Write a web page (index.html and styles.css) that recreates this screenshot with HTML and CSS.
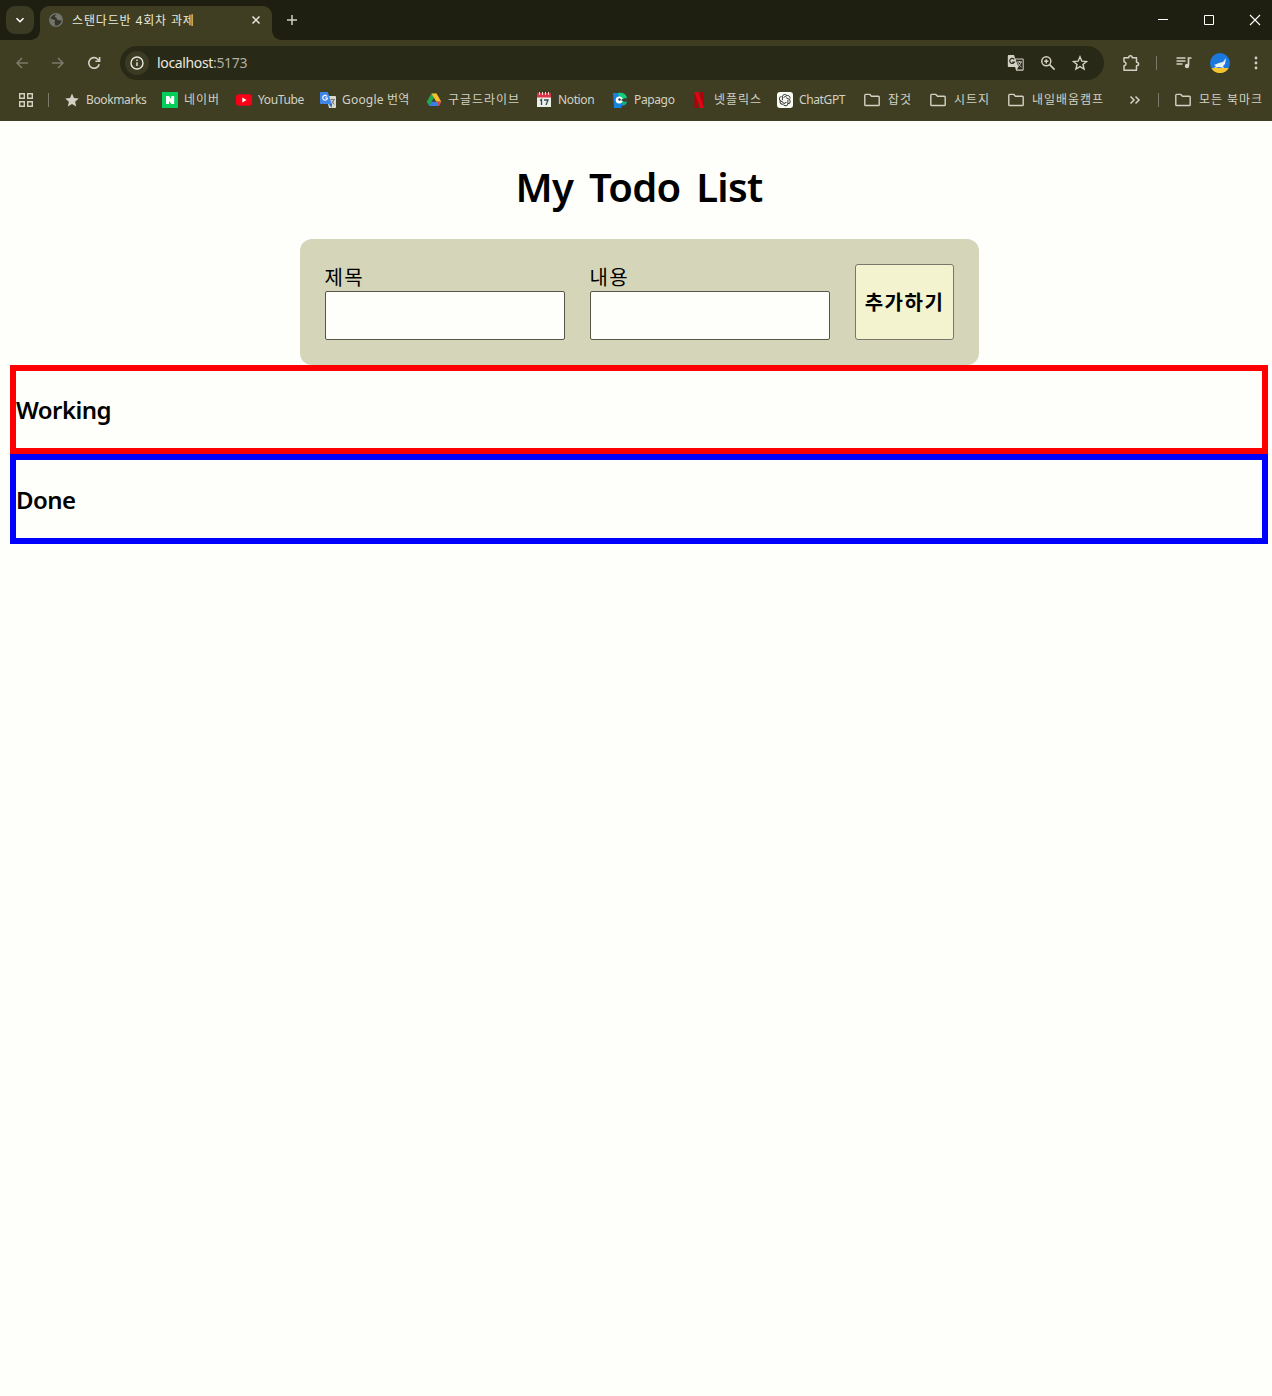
FILE: index.html
```html
<!DOCTYPE html>
<html lang="ko">
<head>
<meta charset="utf-8">
<title>스탠다드반 4회차 과제</title>
<link rel="stylesheet" href="styles.css">
</head>
<body>
<svg class="defs" width="0" height="0">
  <symbol id="folder" viewBox="0 0 16 16"><path d="M.8 12.7V3.2c0-.5.3-.8.8-.8h4.2l1.7 1.8h6.9c.5 0 .8.3.8.8v7.7c0 .5-.3.8-.8.8H1.6c-.5 0-.8-.3-.8-.8z" fill="none" stroke="currentColor" stroke-width="1.4"/></symbol>
</svg>
<header class="browser">
  <div class="tabstrip">
    <div class="tabsearch"><svg width="10" height="10" viewBox="0 0 10 10"><path d="M1.5 3.2 5 6.7l3.500-3.500" fill="none" stroke="currentColor" stroke-width="1.6"/></svg></div>
    <div class="tab">
      <svg width="16" height="16" viewBox="0 0 16 16"><circle cx="8" cy="8" r="6.300" fill="#353529" stroke="#757570" stroke-width="1.300"/><path d="M2 6.500 7 8l-.5 2.500 1 3.300C4 13.500 1.800 10.500 2 6.500zM8.500 2l-2 2.500 2 1.500 1 2 4 .5.500-1C13.700 4.500 11.500 2.200 8.500 2z" fill="#757570"/></svg>
      <span class="tab-title">스탠다드반 4회차 과제</span>
      <svg width="10" height="10" viewBox="0 0 10 10"><path d="m1.500 1.500 7 7m0-7-7 7" stroke="currentColor" stroke-width="1.500"/></svg>
    </div>
    <svg class="newtab" width="12" height="12" viewBox="0 0 12 12"><path d="M6 1v10M1 6h10" stroke="currentColor" stroke-width="1.500"/></svg>
    <div class="window-controls">
      <svg width="12" height="12" viewBox="0 0 12 12"><path d="M1 5.500h10" stroke="currentColor"/></svg>
      <svg width="12" height="12" viewBox="0 0 12 12"><path d="M1.500 1.500h9v9h-9z" fill="none" stroke="currentColor"/></svg>
      <svg width="12" height="12" viewBox="0 0 12 12"><path d="m1 1 10 10m0-10L1 11" stroke="currentColor" stroke-width="1.100"/></svg>
    </div>
  </div>
  <div class="toolbar">
    <div class="nav">
      <svg class="dim" width="16" height="16" viewBox="0 0 16 16"><path d="M14 8H3m5-5L3 8l5 5" fill="none" stroke="currentColor" stroke-width="1.500"/></svg>
      <svg class="dim" width="16" height="16" viewBox="0 0 16 16"><path d="M2 8h11M8 3l5 5-5 5" fill="none" stroke="currentColor" stroke-width="1.500"/></svg>
      <svg width="16" height="16" viewBox="0 0 16 16"><path d="M13.200 9.200a5.300 5.300 0 1 1-1.400-5l1.700 1.700M13.600 2v4.200H9.400" fill="none" stroke="currentColor" stroke-width="1.600"/></svg>
    </div>
    <div class="omnibox">
      <div class="site-info"><svg width="16" height="16" viewBox="0 0 16 16"><circle cx="8" cy="8" r="6" fill="none" stroke="currentColor" stroke-width="1.400"/><path d="M8 7.200v3.800M8 4.600v1.500" stroke="currentColor" stroke-width="1.400"/></svg></div>
      <span class="url">localhost<span class="port">:5173</span></span>
      <div class="omni-actions">
        <svg width="18" height="18" viewBox="0 0 18 18"><path d="M2 1h5l1.200 3.500h7.300c.8 0 1.200.4 1.200 1.200v9.800c0 .8-.4 1.200-1.200 1.200H9.200L8 13H2c-.8 0-1.200-.4-1.200-1.200V2.200C.8 1.400 1.200 1 2 1z" fill="currentColor"/><path d="M8.700 5.500h7v10H10l1.400-2.500z" fill="#2b2b20"/><path d="M7.200 5.300A2.500 2.500 0 1 0 7.500 8H5.200" fill="none" stroke="#2b2b20" stroke-width="1.200"/><path d="M10 8h5m-2.500-1v1m1.500 0c-.4 2-1.600 3.500-3 4.500M11 9c.6 1.800 2 3 3.500 4" fill="none" stroke="currentColor" stroke-width="1"/></svg>
        <svg width="16" height="16" viewBox="0 0 16 16"><circle cx="6.300" cy="6.300" r="4.500" fill="none" stroke="currentColor" stroke-width="1.500"/><path d="m9.600 9.600 5 5M6.300 4.200v4.200M4.200 6.300h4.200" stroke="currentColor" stroke-width="1.500"/></svg>
        <svg width="16" height="16" viewBox="0 0 16 16"><path d="m8 1.800 1.800 4.300 4.700.4-3.500 3 1.100 4.600L8 11.600l-4.100 2.500L5 9.500l-3.500-3 4.700-.4z" fill="none" stroke="currentColor" stroke-width="1.400"/></svg>
      </div>
    </div>
    <div class="extras">
      <svg width="18" height="18" viewBox="0 0 18 18"><path d="M2 3.800h4.700C6.700 1 10.200 1 10.200 3.800h4.300v4.500c2.800 0 2.800 3.500 0 3.500v4.400H2v-4.400c2.800-.5 2.800-3.500 0-4z" fill="none" stroke="currentColor" stroke-width="1.500" stroke-linejoin="round"/></svg>
      <i class="divider"></i>
      <svg width="16" height="16" viewBox="0 0 16 16"><path d="M.5 3h9M.5 6h9M.5 9h6" stroke="currentColor" stroke-width="1.500"/><path d="M15.500 3h-3v7.500" fill="none" stroke="currentColor" stroke-width="1.700"/><circle cx="11" cy="11" r="2.200" fill="currentColor"/></svg>
      <svg class="avatar" width="20" height="20" viewBox="0 0 20 20"><circle cx="10" cy="10" r="10" fill="#1b78dc"/><path d="M1.300 15h17.400a10 10 0 0 1-17.400 0z" fill="#f5c32c"/><path d="m4 12 5-2 4-1 3-4-1 6-2 2 1 2-5-1-5 1 2-2z" fill="#e8f2f5"/></svg>
      <svg width="16" height="16" viewBox="0 0 16 16" fill="currentColor"><circle cx="8" cy="3" r="1.400"/><circle cx="8" cy="8" r="1.400"/><circle cx="8" cy="13" r="1.400"/></svg>
    </div>
  </div>
  <nav class="bookmarks">
    <div class="item"><svg width="16" height="16" viewBox="0 0 16 16"><path d="M1.700 1.700h4.600v4.600H1.700zM9.700 1.700h4.600v4.600H9.700zM1.700 9.700h4.600v4.600H1.700zM9.700 9.700h4.600v4.600H9.700z" fill="none" stroke="currentColor" stroke-width="1.400"/></svg></div>
    <i class="divider"></i>
    <div class="item"><svg width="16" height="16" viewBox="0 0 16 16"><path d="m8 1.500 1.900 4.600 4.900.4-3.700 3.200 1.100 4.800L8 12l-4.200 2.500 1.100-4.800L1.200 6.500l4.900-.4z" fill="currentColor"/></svg><span>Bookmarks</span></div>
    <div class="item ko"><svg width="16" height="16" viewBox="0 0 16 16"><path d="M0 0h16v16H0z" fill="#04cf5c"/><path d="M4 4h3l2.200 3.300V4h3v8h-3L7 8.700V12H4z" fill="#fff"/></svg><span>네이버</span></div>
    <div class="item"><svg width="16" height="16" viewBox="0 0 16 16"><rect y="2.300" width="16" height="11.500" rx="3" fill="#fa0018"/><path d="m6.300 5.500 4.300 2.500-4.300 2.500z" fill="#fff"/></svg><span>YouTube</span></div>
    <div class="item mixed"><svg width="16" height="16" viewBox="0 0 16 16"><path d="M6 4h9.200c.5 0 .8.3.8.8v10.400c0 .5-.3.800-.8.800H9z" fill="#d7d8d0"/><path d="M.8 0h7l4 12H.8c-.5 0-.8-.3-.8-.8V.8C0 .3.300 0 .8 0z" fill="#4086e8"/><path d="M7 4.300A2.400 2.400 0 1 0 7.500 6H5.200" fill="none" stroke="#fff" stroke-width="1.100"/><path d="m9 12 2.500 4 .5-4z" fill="#2864b8"/><path d="M10.700 7.500h4.200m-1 .2c-.4 1.800-1.200 3-2.300 4m.1-2.800 2.600 3.600" fill="none" stroke="#777"/></svg><span>Google 번역</span></div>
    <div class="item ko"><svg width="16" height="16" viewBox="0 0 16 16"><path d="M5.500 1.500h5L8 5.800 3.200 14 .7 9.800z" fill="#24a852"/><path d="M5.500 1.500h5l4.800 8.300h-5z" fill="#fbc02a"/><path d="M5.600 9.800h9.700L12.900 14H3.200z" fill="#397fe8"/><path d="m10.300 9.800 2.600 4.200 2.400-4.200z" fill="#e94335"/></svg><span>구글드라이브</span></div>
    <div class="item"><svg width="16" height="16" viewBox="0 0 16 16"><path d="M1 1h14v14H1z" fill="#eceee8"/><path d="M1 1h14v4.500H1z" fill="#d93544"/><path d="M3.500 0v3M6.500 0v3M9.500 0v3M12.500 0v3" stroke="#f6d5d5"/><path d="M4 8.500 5.500 7.500V13M8 8h4l-2 5" fill="none" stroke="#334d4d" stroke-width="1.300"/></svg><span>Notion</span></div>
    <div class="item"><svg width="16" height="16" viewBox="0 0 16 16"><path d="M1 1h7c4 0 6 2 7 5H9l6 4c-1 3-3 4-6 4l1 2H2z" fill="#1682dc"/><path d="M6 1c5-1 8 1 9 5L8 8z" fill="#12ce7b"/><path d="m9 9 6 1c-1 2-2 3-4 3z" fill="#12b86a"/><circle cx="7.200" cy="8" r="3.500" fill="#fff"/><circle cx="7.500" cy="7.500" r="1.200" fill="#223b54"/><path d="m8.500 8 5-2v4z" fill="#3c3c2c"/></svg><span>Papago</span></div>
    <div class="item ko"><svg width="16" height="16" viewBox="0 0 16 16"><path d="M2.500 0h3.700v16H2.500zM8.300 0H12v16H8.300z" fill="#b5000b"/><path d="M2.500 0h3.700L12 16H8.300z" fill="#e00715"/></svg><span>넷플릭스</span></div>
    <div class="item"><svg width="16" height="16" viewBox="0 0 16 16"><rect width="16" height="16" rx="3" fill="#fbfbf6"/><g fill="none" stroke="#292924" stroke-width=".9"><path id="knot" d="M5.400 8.200V4.800a2.400 2.400 0 0 1 4.500-1.100M6.500 5.500l3-1.700a2.400 2.400 0 0 1 3.400 3"/><use href="#knot" transform="rotate(120 8 8)"/><use href="#knot" transform="rotate(240 8 8)"/></g></svg><span>ChatGPT</span></div>
    <div class="item ko folder"><svg width="16" height="16"><use href="#folder"/></svg><span>잡것</span></div>
    <div class="item ko folder"><svg width="16" height="16"><use href="#folder"/></svg><span>시트지</span></div>
    <div class="item ko folder"><svg width="16" height="16"><use href="#folder"/></svg><span>내일배움캠프</span></div>
    <svg width="12" height="12" viewBox="0 0 12 12"><path d="m1.500 2.500 3.500 3.500-3.500 3.500M6.500 2.500 10 6 6.500 9.500" fill="none" stroke="currentColor" stroke-width="1.500"/></svg>
    <i class="divider"></i>
    <div class="item ko folder"><svg width="16" height="16"><use href="#folder"/></svg><span>모든 북마크</span></div>
  </nav>
</header>
<main class="page">
  <h1>My Todo List</h1>
  <form class="todo-form">
    <label class="field">제목<input type="text"></label>
    <label class="field">내용<input type="text"></label>
    <button type="button">추가하기</button>
  </form>
  <section class="list working"><h2>Working</h2></section>
  <section class="list done"><h2>Done</h2></section>
</main>
</body>
</html>
```
FILE: styles.css
```css
* { box-sizing: border-box; }
body {
  margin: 0;
  min-height: 1396px;
  background: #fefefa;
  color: #000;
  font-family: "Noto Sans", "Noto Sans CJK KR", sans-serif;
}
svg { display: block; flex: none; }
.defs { position: absolute; }

.browser { height: 121px; background: #3f3e22; color: #d2d1c4; }
.tabstrip { display: flex; height: 40px; background: #1f1f11; padding-left: 6px; }
.tabsearch {
  display: flex; align-items: center; justify-content: center;
  width: 28px; height: 28px; margin: 6px 6px 0 0;
  border-radius: 9px; background: #3b3a22; color: #fff;
}
.tab {
  position: relative;
  display: flex; align-items: center;
  width: 232px; height: 34px; margin-top: 6px; padding: 0 11px 6px 8px;
  border-radius: 9px 9px 0 0; background: #3f3e22; color: #e8e8df;
}
/* concave feet where the active tab meets the toolbar */
.tab::before, .tab::after { content: ""; position: absolute; bottom: 0; width: 9px; height: 9px; }
.tab::before { left: -9px; background: radial-gradient(circle at 0 0, transparent 8.5px, #3f3e22 9px); }
.tab::after { right: -9px; background: radial-gradient(circle at 100% 0, transparent 8.5px, #3f3e22 9px); }
.tab-title { flex: 1; margin-left: 8px; font-size: 12px; letter-spacing: .85px; white-space: nowrap; }
.newtab { margin: 14px 0 0 14px; }
.window-controls { display: flex; gap: 34px; margin: 14px 11px 0 auto; color: #fff; }

.toolbar { display: flex; align-items: center; height: 46px; padding: 0 7px 0 14px; }
.nav { display: flex; gap: 20px; width: 106px; }
.dim { color: #7b7a6b; }
.omnibox { display: flex; align-items: center; width: 984px; height: 34px; padding: 0 16px 0 5px; border-radius: 17px; background: #292917; }
.site-info { display: flex; align-items: center; justify-content: center; width: 24px; height: 24px; border-radius: 50%; background: #3b3a22; color: #e8e8df; }
.url { margin: 0 0 2px 8px; font-size: 14px; letter-spacing: -.35px; color: #e8e8df; }
.port { color: #b0afa2; }
.omni-actions { display: flex; align-items: center; gap: 16px; margin-left: auto; }
.omni-actions svg:first-child { margin-right: -1px; }
.extras { display: flex; align-items: center; margin-left: 18px; }
.extras .divider { margin: 0 19px 0 16px; }
.avatar { margin: 0 18px; }
.divider { width: 1px; height: 14px; background: #7b7a6b; }

.bookmarks {
  display: grid; align-items: center; height: 28px; padding-left: 18px;
  grid-template-columns: 30px 16px 98px 74px 84px 106px 110px 76px 80px 85px 87px 66px 78px 121px 29px 17px 1fr;
  font-size: 12px; white-space: nowrap;
}
.item { display: flex; align-items: center; gap: 6px; letter-spacing: -.37px; }
.item span { margin-bottom: 2px; }
.item.ko { letter-spacing: .95px; }
.item.mixed { letter-spacing: .2px; }
.item.folder { gap: 8px; }

.page { padding: 43px 4px 0 10px; }
h1 { margin: 0; height: 75px; text-align: center; font-size: 40px; line-height: 45px; font-weight: 600; letter-spacing: -.7px; word-spacing: 6px; }
.todo-form {
  display: flex; justify-content: space-between;
  width: 679px; height: 126px; margin: 0 auto; padding: 25px;
  border-radius: 12px; background: #d5d5b9;
}
.field { display: flex; flex-direction: column; width: 240px; font-size: 20px; line-height: 27px; letter-spacing: 1.3px; }
input { height: 49px; margin: 0; border: 1px solid #555548; border-radius: 2px; background: #fefefa; }
button {
  width: 99px; height: 76px; padding: 0 0 2px 1px;
  border: 1px solid #77776c; border-radius: 3px; background: #f3f3cf; color: #000;
  font: 700 20px "Noto Sans CJK KR", sans-serif; letter-spacing: 1.5px;
}
.list { height: 89px; border: 6px solid #f00; }
.done { height: 90px; border-color: #00f; }
h2 { margin: 22px 0 0; font-size: 24px; line-height: 34px; font-weight: 600; letter-spacing: -.55px; }
.done h2 { margin-top: 23px; }
```
